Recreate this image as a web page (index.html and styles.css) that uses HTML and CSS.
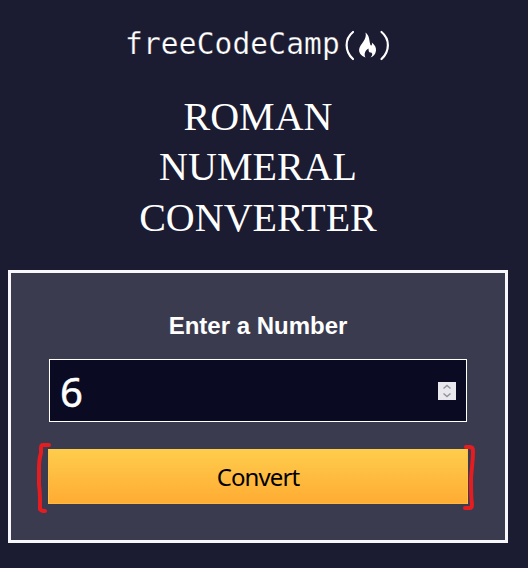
FILE: index.html
```
<!DOCTYPE html>
<html lang="en">
<head>
<meta charset="utf-8">
<title>Roman Numeral Converter</title>
<link rel="stylesheet" href="styles.css">
</head>
<body>
<main>
  <header class="logo" aria-label="freeCodeCamp">
    <span class="logo-name">freeCodeCamp</span>
    <svg class="logo-mark" width="48" height="32" viewBox="343 29 48 32">
      <path class="paren" d="M353 32C344.500 39 344.500 51 353 59M381.500 32C390 39 390 51 381.500 59"/>
      <path class="flame" d="M365.500 32.500C369.500 35.500 369 39.500 370.300 44.500C371 46.500 372.500 45.500 371.800 42.500C375 45 376.200 47.500 376 50.500C375.700 54 373.500 56.500 370.500 57.500C373 55 372.500 53 371 52.500C369 53 368.500 51 368.500 48.500C365.500 50 363.500 54 365.500 57.500C361 56 358.500 52.500 359.200 49C360 44 367.500 39.500 365.500 32.500Z"/>
    </svg>
  </header>
  <h1>Roman Numeral Converter</h1>
  <form class="card">
    <label for="number">Enter a Number</label>
    <div class="field">
      <input id="number" type="text" inputmode="numeric" value="6">
      <svg class="spinner" width="18" height="18" viewBox="0 0 18 18">
        <path d="M5.500 6.500L9 3.500L12.500 6.500M5.500 11.500L9 14.500L12.500 11.500"/>
      </svg>
    </div>
    <div class="action">
      <button type="button">Convert</button>
      <svg class="marks" width="440" height="72" viewBox="36 442 440 72">
        <path d="M49 445H43Q41 445 41 448V453Q39 459 39 468V485Q40 491 40 498V509Q41 511 45 511"/>
        <path d="M466 447H470Q473 447 473 451C473 463 471 472 471 481C471 492 471 499 472 504Q472 508 470 508H465"/>
      </svg>
    </div>
  </form>
</main>
</body>
</html>
```
FILE: styles.css
```
* {
  box-sizing: border-box;
}

body {
  margin: 0;
  min-height: 568px;
  background: #1b1b32;
  color: #fff;
}

main {
  width: 500px;
  margin-left: 8px;
  padding-top: 28px;
}

.logo {
  display: flex;
  height: 34px;
  padding-left: 117px;
}

.logo-name {
  width: 218px;
  font: 29.5px/32px "DejaVu Sans Mono", monospace;
  letter-spacing: 0.15px;
  -webkit-text-stroke: 0.25px #1b1b32;
}

.logo-mark {
  margin-top: 1px;
}

.paren {
  fill: none;
  stroke: #fff;
  stroke-width: 2.2;
  stroke-linecap: round;
}

.flame {
  fill: #fff;
}

h1 {
  width: 250px;
  margin: 30px auto 27px;
  font: 400 40px/50.4px "Liberation Serif", serif;
  text-align: center;
  text-transform: uppercase;
}

.card {
  display: flex;
  flex-direction: column;
  height: 273px;
  padding: 39px 37px 0;
  border: 3px solid #f8f8fc;
  background: #3b3b4f;
}

label {
  height: 28px;
  margin-bottom: 19px;
  font: 700 24px/28px "Liberation Sans", sans-serif;
  text-align: center;
}

.field {
  display: flex;
  align-items: center;
  height: 63px;
  margin: 0 1px 27px;
  padding: 0 10px;
  border: 1px solid #fff;
  background: #0a0a23;
}

.field input {
  flex: 1;
  min-width: 0;
  padding: 3px 0 0;
  border: 0;
  outline: 0;
  background: none;
  color: #fff;
  font: 400 40px/58px "Noto Sans", sans-serif;
  -webkit-text-stroke: 0.5px #fff;
}

.spinner {
  background: #e9e9ed;
  fill: none;
  stroke: #93939f;
  stroke-width: 1.5;
}

.action {
  position: relative;
  height: 55px;
}

button {
  width: 100%;
  height: 55px;
  padding: 0;
  border: 1px solid #feac32;
  border-color: #ffcc4c #ffc04a #feb93d;
  background: linear-gradient(#fecc4c, #ffac33);
  color: #000;
  font: 24px/53px "Noto Sans", sans-serif;
  letter-spacing: -0.9px;
}

.marks {
  position: absolute;
  top: -7px;
  left: -12px;
  fill: none;
  stroke: #e51c20;
  stroke-width: 4;
  stroke-linecap: round;
  stroke-linejoin: round;
}
```
